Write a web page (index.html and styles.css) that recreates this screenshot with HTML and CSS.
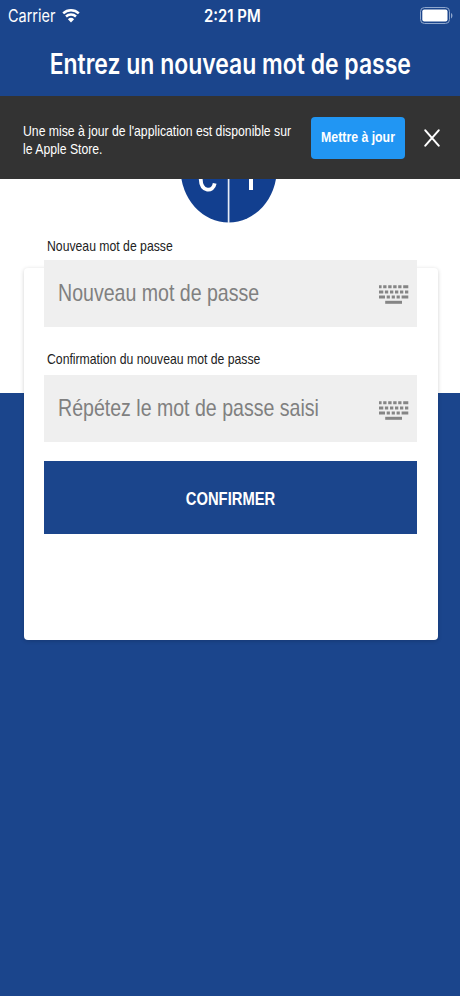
FILE: index.html
```html
<!DOCTYPE html>
<html lang="fr">
<head>
<meta charset="utf-8">
<title>Entrez un nouveau mot de passe</title>
<link rel="stylesheet" href="styles.css">
</head>
<body>
<div class="screen">
  <header class="header">
    <div class="status">
      <div class="carrier">
        <span class="carrier-name">Carrier</span>
        <svg class="wifi" width="18" height="15" viewBox="0 0 18 15">
          <path d="M1.2 5.3a11.4 11.4 0 0 1 15.6 0M4 8.5a7.4 7.4 0 0 1 10 0" fill="none" stroke="#fff" stroke-width="2.5"/>
          <path d="M5.9 11.2a4.6 4.6 0 0 1 6.2 0L9 14.6z" fill="#fff"/>
        </svg>
      </div>
      <span class="time">2:21 PM</span>
      <svg class="battery" width="33" height="17" viewBox="0 0 33 17">
        <rect x=".5" y=".5" width="29" height="16" rx="4" fill="none" stroke="#8fa7cd"/>
        <rect x="2.3" y="2.5" width="25.2" height="12" rx="2" fill="#fff"/>
        <path d="M31 6v5.4c1.9-.8 1.9-4.6 0-5.4z" fill="#8fa7cd"/>
      </svg>
    </div>
    <h1 class="title"><span>Entrez un nouveau mot de passe</span></h1>
  </header>
  <section class="banner">
    <p class="message">Une mise à jour de l'application est disponible sur<br>le Apple Store.</p>
    <button class="update"><span>Mettre à jour</span></button>
    <svg class="close" width="16" height="18" viewBox="0 0 16 18">
      <path d="M1.3 1.3l13.4 15.4M14.7 1.3L1.3 16.7" stroke="#fff" stroke-width="2" stroke-linecap="round"/>
    </svg>
  </section>
  <main class="content">
    <div class="logo">
      <svg width="96" height="44" viewBox="0 0 96 44">
        <ellipse cx="47.7" cy="-9.3" rx="48" ry="52.7" fill="#123f8f"/>
        <path d="M47.6 0v44" stroke="#e6ecf7" stroke-width="1.7"/>
        <path d="M19.7 0c.4 13.4 12.4 13.4 14 4.4" fill="none" stroke="#fff" stroke-width="3.8"/>
        <path d="M70 0v11" stroke="#fff" stroke-width="4"/>
      </svg>
    </div>
    <form class="card">
      <label class="label"><span>Nouveau mot de passe</span></label>
      <div class="field">
        <span class="placeholder">Nouveau mot de passe</span>
        <svg class="keyboard" width="30" height="20" viewBox="0 0 30 20"><use href="#keys"/></svg>
      </div>
      <label class="label second"><span>Confirmation du nouveau mot de passe</span></label>
      <div class="field">
        <span class="placeholder">Répétez le mot de passe saisi</span>
        <svg class="keyboard lower" width="30" height="20" viewBox="0 0 30 20"><use href="#keys"/></svg>
      </div>
      <button class="confirm" type="button"><span>CONFIRMER</span></button>
    </form>
  </main>
</div>
<svg class="symbols" width="0" height="0">
  <defs>
    <g id="keys" fill="none" stroke="#858585" stroke-width="3">
      <path d="M0 1.7h2.6m1.6 0h3.3m1.7 0h3.4m1.6 0h3.4m1.6 0h3.3m1.7 0h5.1"/>
      <path d="M0 6.9h4.3m1.6 0h3.3m1.8 0h3.3m1.7 0h3.3m1.7 0h3.3m1.7 0h3.3"/>
      <path d="M0 12h6m1.7 0h3.2m1.8 0h3.2m1.7 0h3.2m1.8 0h6.7"/>
      <path d="M6.2 17.3h16.8"/>
    </g>
  </defs>
</svg>
</body>
</html>
```

FILE: styles.css
```css
* { box-sizing: border-box; }
body { margin: 0; font-family: "Liberation Sans", Arial, sans-serif; }
button { border: 0; padding: 0; font-family: inherit; color: #fff; }
.screen {
  display: flex;
  flex-direction: column;
  width: 460px;
  height: 996px;
  overflow: hidden;
  background: #1b458c;
}
.header { height: 96px; color: #fff; font-family: Inter, sans-serif; }
.status {
  display: grid;
  grid-template-columns: 1fr auto 1fr;
  align-items: center;
  height: 31px;
  padding: 0 7px 0 8px;
}
.carrier { display: flex; align-items: center; }
.carrier-name {
  width: 54px;
  font-size: 17px;
  transform: scaleX(.85);
  transform-origin: left;
}
.time {
  width: 54px;
  font-size: 17px;
  font-weight: 600;
  white-space: nowrap;
  transform: scaleX(.875);
  transform-origin: left;
}
.battery { justify-self: end; }
.title {
  display: flex;
  justify-content: center;
  margin: 16px 0 0;
  font-size: 28px;
  line-height: 34px;
  font-weight: 600;
  white-space: nowrap;
}
.title span { transform: scaleX(.82); }
.banner {
  display: flex;
  align-items: center;
  height: 83px;
  padding: 0 20px 0 23px;
  background: #333;
  color: #fff;
}
.message {
  width: 288px;
  margin: 4px 0 0;
  font-size: 15px;
  line-height: 18px;
  white-space: nowrap;
  transform: scaleX(.815);
  transform-origin: left;
}
.update {
  display: flex;
  align-items: center;
  justify-content: center;
  width: 94px;
  height: 42px;
  padding-bottom: 2px;
  border-radius: 4px;
  background: #2196f3;
  font-size: 15px;
  font-weight: 700;
  white-space: nowrap;
}
.update span { transform: scaleX(.82); }
.close { margin-left: auto; }
.content {
  height: 214px;
  background: #fff;
}
.logo { display: flex; height: 89px; padding-left: 181px; }
.card {
  display: flex;
  flex-direction: column;
  width: 414px;
  height: 372px;
  margin: 0 0 0 24px;
  padding: 0 21px 0 20px;
  border-radius: 4px;
  background: #fff;
  box-shadow: 0 1px 4px rgba(0, 0, 0, .18);
}
.label {
  height: 20px;
  margin: -32px 0 4px 3px;
  color: #222;
  font-size: 15px;
  line-height: 20px;
  white-space: nowrap;
}
.label span { display: inline-block; transform: scaleX(.815); transform-origin: left; }
.label.second { margin: 22px 0 6px 3px; }
.field {
  display: flex;
  align-items: center;
  justify-content: space-between;
  height: 67px;
  padding: 0 8px 0 14px;
  background: #efefef;
  color: #808080;
  font-size: 24px;
}
.placeholder { margin-top: -1px; white-space: nowrap; transform: scaleX(.815); transform-origin: left; }
.keyboard { margin-top: 2px; }
.keyboard.lower { margin-top: 5px; }
.confirm {
  height: 73px;
  margin-top: 19px;
  padding-top: 3px;
  background: #1b458c;
  font-size: 18px;
  font-weight: 700;
}
.confirm span { display: inline-block; transform: scaleX(.82); }
.symbols { display: block; }
```
